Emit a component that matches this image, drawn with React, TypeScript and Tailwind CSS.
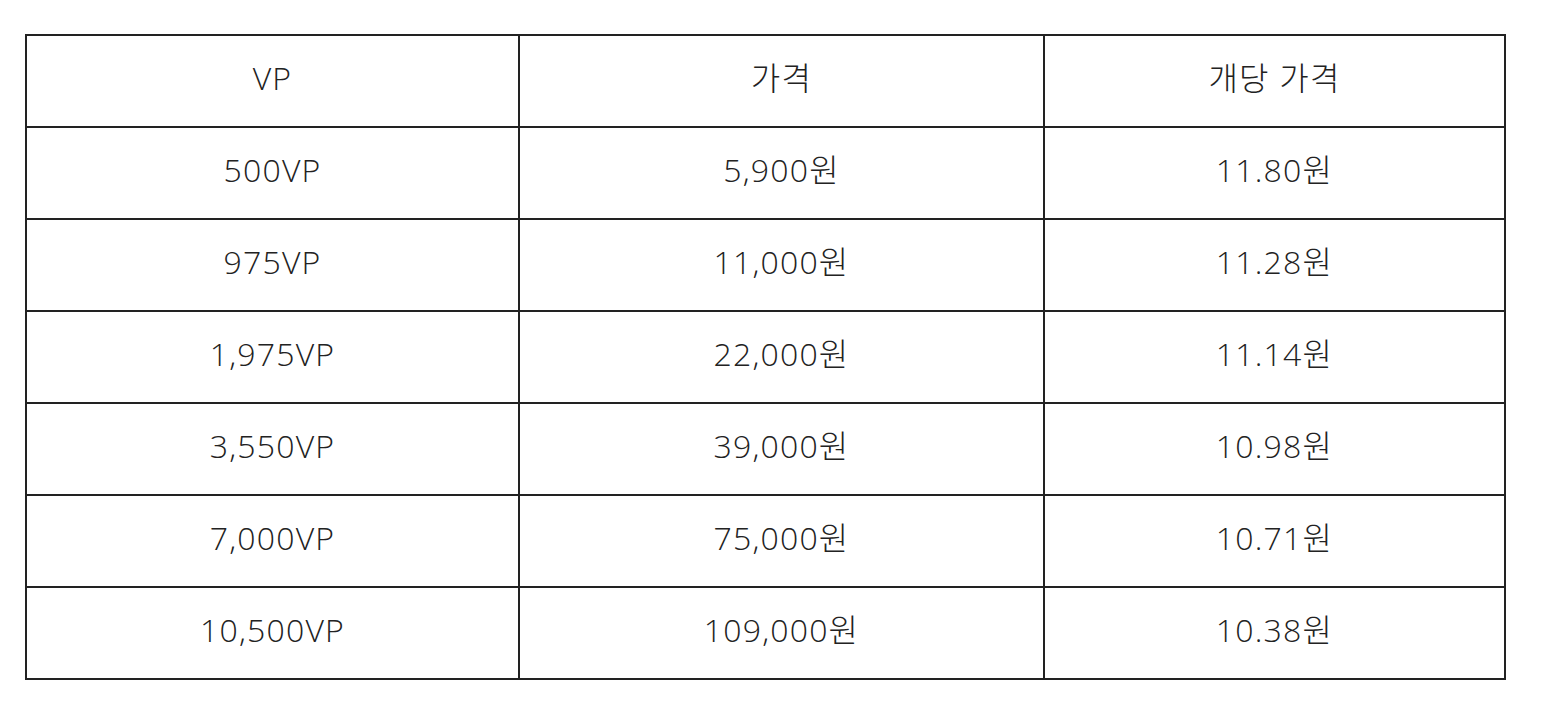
const rows = [
  ["500VP", "5,900원", "11.80원"],
  ["975VP", "11,000원", "11.28원"],
  ["1,975VP", "22,000원", "11.14원"],
  ["3,550VP", "39,000원", "10.98원"],
  ["7,000VP", "75,000원", "10.71원"],
  ["10,500VP", "109,000원", "10.38원"],
];

const cell = "h-[92px] border-2 border-[#222] text-center align-middle p-0 pb-[7px]";

export default function App() {
  return (
    <div className="min-h-screen bg-white pt-[34px] pl-[25px] text-[#222] font-['Open_Sans','Noto_Sans_CJK_KR',sans-serif] font-light text-[32px] tracking-[1.2px]">
      <table className="w-[1479px] border-collapse table-fixed">
        <colgroup>
          <col className="w-[493px]" />
          <col className="w-[525px]" />
          <col className="w-[461px]" />
        </colgroup>
        <thead>
          <tr>
            <th className={`${cell} font-light`}>VP</th>
            <th className={`${cell} font-light`}>가격</th>
            <th className={`${cell} font-light`}>개당 가격</th>
          </tr>
        </thead>
        <tbody>
          {rows.map((r) => (
            <tr key={r[0]}>
              {r.map((v, i) => (
                <td key={i} className={cell}>
                  {v}
                </td>
              ))}
            </tr>
          ))}
        </tbody>
      </table>
    </div>
  );
}
